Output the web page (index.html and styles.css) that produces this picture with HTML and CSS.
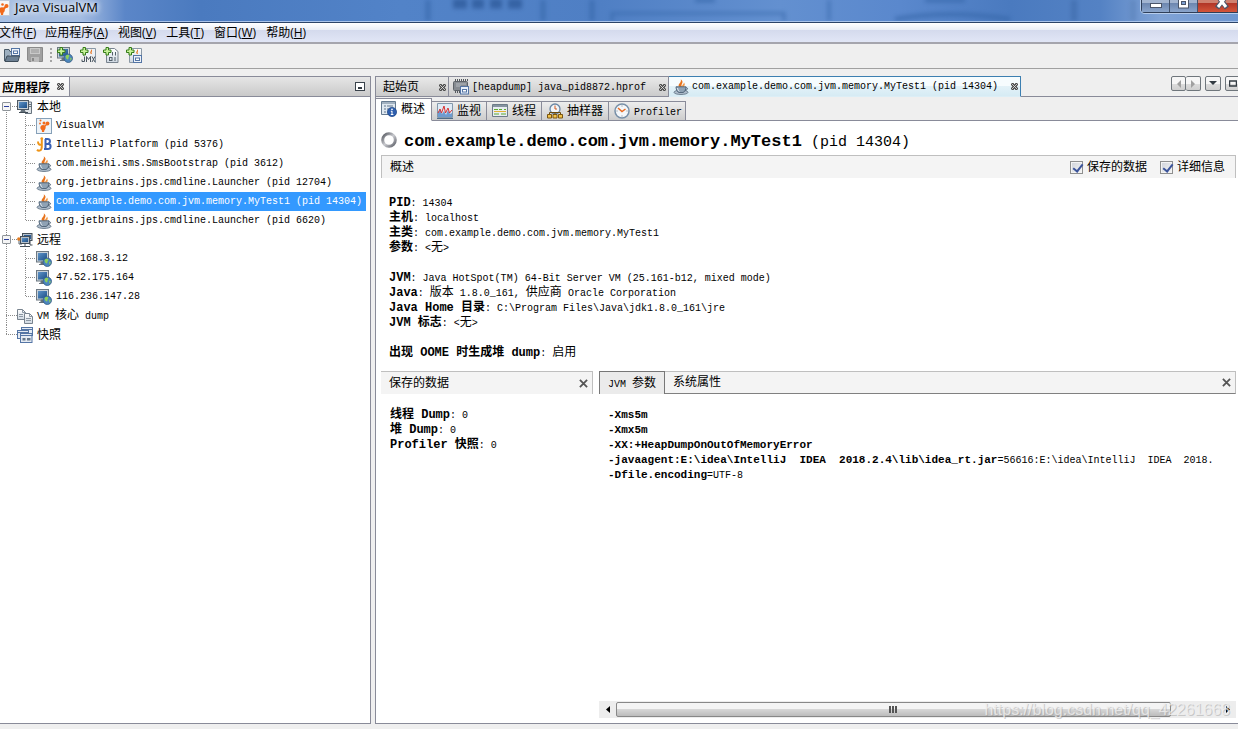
FILE: index.html
```html
<!DOCTYPE html>
<html lang="zh-CN">
<head>
<meta charset="utf-8">
<title>Java VisualVM</title>
<link rel="stylesheet" href="styles.css">
</head>
<body>
<svg class="defs" aria-hidden="true">
  <defs>
    <linearGradient id="screen" x1="0" y1="0" x2="1" y2="1"><stop offset="0" stop-color="#5d93c8"/><stop offset="1" stop-color="#1c4e86"/></linearGradient>
    <linearGradient id="paper" x1="0" y1="0" x2="0" y2="1"><stop offset="0" stop-color="#ffffff"/><stop offset="1" stop-color="#cfd8e2"/></linearGradient>
    <linearGradient id="ring" x1="0" y1="0" x2="1" y2="1"><stop offset="0" stop-color="#55585f"/><stop offset=".5" stop-color="#c9cacf"/><stop offset="1" stop-color="#5d6068"/></linearGradient>
  </defs>
  <symbol id="i-java" viewBox="0 0 16 16">
    <path d="M6.500 8C3.500 5.500 9 4 7.800 .3C12 3.500 7 5 9 8z" fill="#e8731c"/><path d="M9.400 8c-1-2 1.200-2.600 1.600-4.600C12.600 5.500 11.400 6.500 10.800 8z" fill="#f09a4a"/>
    <ellipse cx="8" cy="13.300" rx="7" ry="2.200" fill="#aebccb" stroke="#5c6e80" stroke-width=".8"/>
    <path d="M3 7.800h10c0 3-1.500 5.400-3 5.700H6C4.500 13.200 3 10.800 3 7.800z" fill="#8fa2b4" stroke="#4d6175" stroke-width=".9"/>
    <path d="M4.500 9c.3 1.800 1 3 1.900 3.500" stroke="#e8eef4" fill="none"/><path d="M12.800 8.800c2.500-.6 2.300 2.500-.9 2.400" stroke="#4d6175" fill="none"/>
  </symbol>
  <symbol id="i-vm" viewBox="0 0 16 16">
    <rect x=".5" y=".5" width="15" height="15" fill="#edf3f8" stroke="#86a0b8"/>
    <g fill="#f26a1b"><circle cx="7" cy="9.500" r="2.600"/><circle cx="11.500" cy="5.500" r="1.900"/><circle cx="8" cy="5" r="1.500"/><circle cx="4.500" cy="2.500" r="1"/><circle cx="4" cy="5.500" r=".9"/><path d="M5.500 10l3.500 0-1 4H6zM7 9l4-4 1 1-4 4z"/></g>
  </symbol>
  <symbol id="i-vm-cut" viewBox="6 0 10 16">
    <rect x="-1" y=".5" width="16.500" height="15" fill="#f6f6f6" stroke="#c3ccd8"/>
    <g fill="#f26a1b"><circle cx="8" cy="10" r="2.800"/><circle cx="12.500" cy="6" r="2"/><circle cx="8.500" cy="4.500" r="1.300"/><path d="M6 10h4l-1 5H7zM8 9l4-4 1.500 1.500-4 4z"/></g>
  </symbol>
  <symbol id="i-jb" viewBox="0 0 16 16">
    <path d="M9 2h2.500c3.200 0 3.200 4 .5 4.700c3.600.3 3.400 5.300-.2 5.300H8" fill="none" stroke="#3b62b5" stroke-width="2"/><path d="M9.500 2v10M9 7h4" stroke="#3b62b5" stroke-width="2"/>
    <path d="M5.800 1v8.500c0 4.500-3 5-4.800 3.200M2 4.500c0 3.500 2 3.500 4 3" fill="none" stroke="#ef9518" stroke-width="2"/><circle cx="5.800" cy="1.500" r="1.300" fill="#ef9518"/>
  </symbol>
  <symbol id="i-local" viewBox="0 0 16 16">
    <path d="M11 3h3.500v11.500H8" fill="#dfe4e8" stroke="#68747f"/><path d="M12 5.500h2M12 7.500h2" stroke="#68747f"/>
    <rect x=".5" y="1.500" width="11" height="9" fill="#c8d1d8" stroke="#4f5963"/><rect x="2" y="3" width="8" height="6" fill="url(#screen)"/><path d="M4 11h4l1 2.500H3z" fill="#66727c"/><path d="M2 13.500h9" stroke="#3f4a54"/>
  </symbol>
  <symbol id="i-host" viewBox="0 0 16 16">
    <rect x=".5" y=".5" width="12" height="10.500" fill="#c8d1d8" stroke="#6d7882"/><rect x="2" y="2" width="9" height="7.500" fill="url(#screen)"/><path d="M5 11h4v2H5zM3 13.500h8" fill="#66727c" stroke="#66727c"/>
    <circle cx="11.300" cy="11.300" r="4.200" fill="#4c86be" stroke="#365d83" stroke-width=".8"/><path d="M8.500 9c1.500-1.600 3.500-1.500 3.800-.3c0 1.500-1.400 1.600-.8 3c-.5 1.500-2 .3-2.500-.8zM13 10.500l1.800 1-1.200 2.400z" fill="#8ed159"/>
  </symbol>
  <symbol id="i-remote" viewBox="0 0 16 16">
    <path d="M2 6v6h3" stroke="#58646e" fill="none"/>
    <rect x="5.500" y="1.500" width="9.500" height="7" fill="#b5c0ca" stroke="#444f59"/><path d="M7 3h7v4H7z" fill="#315f94"/>
    <rect x="3.500" y="4.500" width="9" height="7" fill="#b5c0ca" stroke="#444f59"/><rect x="5" y="6" width="6" height="4" fill="url(#screen)"/><path d="M8 12v2M3 14.500h10" stroke="#444f59"/><path d="M13 9v4h2.500" stroke="#444f59" fill="none"/><circle cx="1.800" cy="7" r="1.700" fill="#e07a20"/>
  </symbol>
  <symbol id="i-dump" viewBox="0 0 16 16">
    <path d="M.5 1.500h5l3 3v7h-8z" fill="url(#paper)" stroke="#78838e"/><path d="M5.500 1.500v3h3M2 6.500h4M2 8.500h4" fill="none" stroke="#8b97a3"/>
    <path d="M7.500 5.500h5l3 3v7h-8z" fill="url(#paper)" stroke="#78838e"/><path d="M12.500 5.500v3h3M9 10.500h5M9 12.500h5" fill="none" stroke="#8b97a3"/>
  </symbol>
  <symbol id="i-snap" viewBox="0 0 16 16">
    <g fill="#e5ebf3" stroke="#5475a5"><rect x="4.500" y=".5" width="11" height="8"/><path d="M4.500 2.500h11"/><rect x=".5" y="3.500" width="11" height="8"/><path d="M.5 5.500h11"/><rect x="3.500" y="6.500" width="11.500" height="9"/><path d="M3.500 8.500H15"/></g><path d="M5.500 11h3v2.500h-3zM10 11h3.500v2.500H10z" fill="#66788c"/>
  </symbol>
  <symbol id="i-open" viewBox="0 0 16 16">
    <path d="M.5 14V2.500h4.500l1 2h3" fill="#9eb0c0" stroke="#4b5b69"/><rect x="7.500" y="1.500" width="8" height="7" fill="#eef3f9" stroke="#5475a5"/><rect x="9.500" y="4" width="4" height="2.500" fill="#fff" stroke="#5475a5"/><path d="M1 14.500L3 9h12.500l-1.500 5.500z" fill="#6d8093" stroke="#3e4c59"/>
  </symbol>
  <symbol id="i-save" viewBox="0 0 16 16">
    <path d="M.5.5h15v14H2L.5 13z" fill="#a0a0a0" stroke="#8a8a8a"/><path d="M3 1h10v6H3z" fill="#c9c9c9"/><path d="M4 3h8M4 5h8" stroke="#969696"/><path d="M4 10h8v5H4z" fill="#bcbcbc"/><path d="M6 11v3" stroke="#888" stroke-width="2"/>
  </symbol>
  <symbol id="i-plus" viewBox="0 0 16 16"><path d="M3 .5h2.500V3H8v2.500H5.500V8H3V5.500H.5V3H3z" fill="#c8f29a" stroke="#357c18"/></symbol>
  <symbol id="i-jmx" viewBox="0 0 16 16"><path d="M3.500 1.500h12v14h-12z" fill="#edf1f5" stroke="#8a98a5"/><path d="M11 7c-2-2 1-3 0-5c2.500 2-.5 3 1 5z" fill="#e8731c"/><path d="M1 9h14v7H1z" fill="#eee"/><path d="M4.500 9.500v5H2v-2M6.500 15V9.500l2 3 2-3V15M12 9.500l3 5.500M15 9.500L12 15" fill="none" stroke="#4a5661"/></symbol>
  <symbol id="i-bits" viewBox="0 0 16 16"><path d="M3.500 1.500h8l3.500 3v11H3.500z" fill="url(#paper)" stroke="#78838e"/><path d="M9.500 5v3.500M12.500 5v3.500M12 10v4" stroke="#53606b"/><rect x="6.500" y="10.500" width="2.500" height="3" fill="none" stroke="#53606b"/></symbol>
  <symbol id="i-app" viewBox="0 0 16 16"><path d="M3.500 1.500h12v14h-12z" fill="url(#paper)" stroke="#8a98a5"/><path d="M11 7c-2-2 1-3 0-5c2.500 2-.5 3 1 5z" fill="#e8731c"/><rect x="7.500" y="8.500" width="8" height="7" fill="#eef3f9" stroke="#5475a5"/><rect x="9.500" y="11" width="4" height="2.500" fill="#fff" stroke="#5475a5"/></symbol>
  <symbol id="i-heap" viewBox="0 0 16 16"><path d="M2 1h13" stroke="#53585e" stroke-width="2" stroke-dasharray="1 1"/><rect x=".5" y="2.500" width="14" height="9" rx="1" fill="#868b91" stroke="#5d6268"/><path d="M3 5h10M3 7h5" stroke="#b6bbc1"/><path d="M2 13h5" stroke="#53585e" stroke-width="2" stroke-dasharray="1 1"/><rect x="7.500" y="7.500" width="8" height="7.500" fill="#e8f0fa" stroke="#5475a5"/><rect x="9.500" y="10.500" width="4" height="2.500" fill="#fff" stroke="#5475a5"/></symbol>
  <symbol id="i-info" viewBox="0 0 16 16"><path d="M.5.5h14v13H.5z" fill="#dfe8f0" stroke="#657a90"/><path d="M1 2h13" stroke="#657a90"/><path d="M3 5h2M6 5h6M3 8h2M6 8h3M3 11h2" stroke="#60758b"/><circle cx="11" cy="11" r="4.600" fill="#2e5fae" stroke="#1b4385" stroke-width=".7"/><path d="M11 10v3.500M9.800 10.300H11M9.800 13.500h2.600" stroke="#fff"/><circle cx="11" cy="8.300" r=".9" fill="#fff"/></symbol>
  <symbol id="i-monitor" viewBox="0 0 16 16"><path d="M.5.5h15v14H.5z" fill="#dfeaf5" stroke="#8298ab"/><path d="M1 14V10l2-4 2 5 2-3 2 4 2-5 2 4 2-1v4z" fill="#6d9bd0"/><path d="M1 10l2-4 1.500 4L7 3l1.500 7L11 5l1.500 5L15 7" fill="none" stroke="#d93030"/><path d="M0 15.500h16" stroke="#4d6b88"/></symbol>
  <symbol id="i-threads" viewBox="0 0 16 16"><path d="M.5 1.500h15v12H.5z" fill="#e8edf1" stroke="#6d7b88"/><path d="M1 3h14" stroke="#8694a1" stroke-width="2"/><path d="M2 6.500h4M7 6.500h3M12 6.500h2" stroke="#5cab32"/><path d="M2 8.500h12" stroke="#e3b233"/><path d="M2 11h5M9 11h5" stroke="#5cab32"/></symbol>
  <symbol id="i-sampler" viewBox="0 0 16 16"><circle cx="8" cy="6" r="5" fill="#f1f4f8" stroke="#6a86a3" stroke-width="1.300"/><path d="M8 2.500V6h2" stroke="#d05a20" fill="none"/><path d="M2.500 11V9.500h11V11M8 9.500V11" fill="none" stroke="#6b4a0d"/><g fill="#f2c34a" stroke="#7c5610"><path d="M.5 11.500h4v3.500h-4zM6 11.500h4v3.500H6zM11.500 11.500h4v3.500h-4z"/></g></symbol>
  <symbol id="i-clock" viewBox="0 0 16 16"><circle cx="8" cy="8" r="7" fill="#f4f7fa" stroke="#7890a8" stroke-width="1.500"/><path d="M8 2.500v1M8 12.500v1M2.500 8h1M12.500 8h1" stroke="#7d8790"/><path d="M4 5l4 3.500L11.500 6" fill="none" stroke="#ea6a20" stroke-width="1.500"/></symbol>
  <symbol id="i-ring" viewBox="0 0 16 16"><circle cx="8" cy="8" r="6.300" fill="none" stroke="url(#ring)" stroke-width="3"/></symbol>
  <symbol id="i-tabx" viewBox="0 0 7 7"><path d="M1 0h1.500L3.500 1.500L4.500 0H6L7 1v1L5.500 3.500L7 5v1L6 7H4.500L3.500 5.500L2.500 7H1L0 6V5l1.500-1.500L0 2V1z" fill="#4c4c4c"/><path d="M1 1l5 5M6 1L1 6" stroke="#e8e8e8" stroke-width=".8"/></symbol>
  <symbol id="i-x" viewBox="0 0 8 8"><path d="M.8.8l6.400 6.400M7.200.8L.8 7.200" stroke="#555" stroke-width="1.600"/></symbol>
</svg>

<header class="titlebar">
  <svg class="backdrop" viewBox="0 0 1238 22" preserveAspectRatio="none" aria-hidden="true">
    <g class="blurred" fill="none" stroke="#3566a8">
      <path d="M428 0v22M543 0v22M592 0v22" stroke-width="5"/><path d="M453 4h14M472 4h12M490 4h12M508 4h14" stroke="#244f8e" stroke-width="10"/>
      <path d="M612 22v-8h172v8M829 0v22" stroke-width="3"/><path d="M895 20q55-10 115 0M925 0h40M695 0h20" stroke-width="5"/><path d="M1074 0v22" stroke="#3d6aa8" stroke-width="6"/><path d="M1133 0v22" stroke="#5b82b8" stroke-width="6"/>
    </g>
  </svg>
  <svg class="icon"><use href="#i-vm-cut"/></svg>
  <h1 class="app-name">Java VisualVM</h1>
  <div class="win-buttons">
    <button class="win-btn" aria-label="最小化"><svg width="14" height="14"><rect x="1.500" y="6.500" width="11" height="4" fill="#fff" stroke="#4b5569"/></svg></button>
    <button class="win-btn win-max" aria-label="最大化"><svg width="12" height="14"><rect x=".5" y="-2" width="10" height="12" fill="#fff" stroke="#4b5569"/><rect x="3.500" y="3.500" width="4" height="3" fill="#7da0d2" stroke="#4b5569"/></svg></button>
    <button class="win-btn win-close" aria-label="关闭"><svg width="14" height="14"><path d="M2 -3L12 10M12 -3L2 10" stroke="#4b5569" stroke-width="5"/><path d="M2.500 -2L11 9M11.500 -2L3 9" stroke="#fff" stroke-width="3"/></svg></button>
  </div>
</header>

<nav class="menubar">
  <button>文件(<u>F</u>)</button><button>应用程序(<u>A</u>)</button><button>视图(<u>V</u>)</button><button>工具(<u>T</u>)</button><button>窗口(<u>W</u>)</button><button>帮助(<u>H</u>)</button>
</nav>

<div class="toolbar">
  <button aria-label="打开"><svg class="icon"><use href="#i-open"/></svg></button>
  <button aria-label="保存" disabled><svg class="icon"><use href="#i-save"/></svg></button>
  <span class="grip"></span>
  <button aria-label="添加远程主机"><svg class="icon"><use href="#i-host"/><use href="#i-plus"/></svg></button>
  <button aria-label="添加 JMX 连接"><svg class="icon"><use href="#i-jmx"/><use href="#i-plus"/></svg></button>
  <button aria-label="添加核心 dump"><svg class="icon"><use href="#i-bits"/><use href="#i-plus"/></svg></button>
  <button aria-label="添加快照"><svg class="icon"><use href="#i-app"/><use href="#i-plus"/></svg></button>
</div>

<div class="workspace">
  <aside class="side">
    <div class="side-head">
      <div class="side-tab"><b>应用程序</b><button class="tab-close" aria-label="关闭"><svg><use href="#i-tabx"/></svg></button></div>
      <button class="minimize" aria-label="最小化"></button>
    </div>
    <ul class="tree">
      <li class="branch"><div class="node"><button class="toggle" aria-label="折叠"></button><svg class="icon"><use href="#i-local"/></svg><span class="name">本地</span></div>
        <ul>
          <li><div class="node"><svg class="icon"><use href="#i-vm"/></svg><span class="name">VisualVM</span></div></li>
          <li><div class="node"><svg class="icon"><use href="#i-jb"/></svg><span class="name">IntelliJ Platform (pid 5376)</span></div></li>
          <li><div class="node"><svg class="icon"><use href="#i-java"/></svg><span class="name">com.meishi.sms.SmsBootstrap (pid 3612)</span></div></li>
          <li><div class="node"><svg class="icon"><use href="#i-java"/></svg><span class="name">org.jetbrains.jps.cmdline.Launcher (pid 12704)</span></div></li>
          <li><div class="node"><svg class="icon"><use href="#i-java"/></svg><span class="name selected">com.example.demo.com.jvm.memory.MyTest1 (pid 14304)</span></div></li>
          <li><div class="node"><svg class="icon"><use href="#i-java"/></svg><span class="name">org.jetbrains.jps.cmdline.Launcher (pid 6620)</span></div></li>
        </ul>
      </li>
      <li class="branch"><div class="node"><button class="toggle" aria-label="折叠"></button><svg class="icon"><use href="#i-remote"/></svg><span class="name">远程</span></div>
        <ul>
          <li><div class="node"><svg class="icon"><use href="#i-host"/></svg><span class="name">192.168.3.12</span></div></li>
          <li><div class="node"><svg class="icon"><use href="#i-host"/></svg><span class="name">47.52.175.164</span></div></li>
          <li><div class="node"><svg class="icon"><use href="#i-host"/></svg><span class="name">116.236.147.28</span></div></li>
        </ul>
      </li>
      <li><div class="node mixed"><svg class="icon"><use href="#i-dump"/></svg><span class="name">VM <span class="zh">核心</span> dump</span></div></li>
      <li><div class="node"><svg class="icon"><use href="#i-snap"/></svg><span class="name">快照</span></div></li>
    </ul>
  </aside>

  <main class="editor">
    <div class="doc-tabs">
      <div class="doc-tab start"><span>起始页</span><button class="tab-close" aria-label="关闭"><svg><use href="#i-tabx"/></svg></button></div>
      <div class="doc-tab"><svg class="icon"><use href="#i-heap"/></svg><span>[heapdump] java_pid8872.hprof</span><button class="tab-close" aria-label="关闭"><svg><use href="#i-tabx"/></svg></button></div>
      <div class="doc-tab active"><svg class="icon"><use href="#i-java"/></svg><span>com.example.demo.com.jvm.memory.MyTest1 (pid 14304)</span><button class="tab-close" aria-label="关闭"><svg><use href="#i-tabx"/></svg></button></div>
      <div class="doc-tools">
        <span class="pair"><button aria-label="上一个" disabled><svg width="6" height="8"><path d="M5 0v8L1 4z"/></svg></button><button aria-label="下一个" disabled><svg width="6" height="8"><path d="M1 0v8l4-4z"/></svg></button></span>
        <button class="solo" aria-label="列表"><svg width="8" height="5"><path d="M0 0h8L4 4z"/></svg></button>
        <button class="solo" aria-label="最大化"><svg width="8" height="7"><path d="M.5 1h7v5h-7z" fill="none" stroke="#333b42" stroke-width="1.500"/></svg></button>
      </div>
    </div>

    <div class="view-tabs" role="tablist">
      <button class="view-tab active" role="tab"><svg class="icon"><use href="#i-info"/></svg><span>概述</span></button>
      <button class="view-tab" role="tab"><svg class="icon"><use href="#i-monitor"/></svg><span>监视</span></button>
      <button class="view-tab" role="tab"><svg class="icon"><use href="#i-threads"/></svg><span>线程</span></button>
      <button class="view-tab" role="tab"><svg class="icon"><use href="#i-sampler"/></svg><span>抽样器</span></button>
      <button class="view-tab" role="tab"><svg class="icon"><use href="#i-clock"/></svg><span>Profiler</span></button>
    </div>

    <div class="overview">
      <h2 class="heading"><svg class="icon"><use href="#i-ring"/></svg><span><b>com.example.demo.com.jvm.memory.MyTest1</b> (pid 14304)</span></h2>
      <div class="bar"><span class="bar-title">概述</span>
        <label><input type="checkbox" checked><span>保存的数据</span></label>
        <label><input type="checkbox" checked><span>详细信息</span></label>
      </div>
      <div class="details">
        <p><b>PID</b>: 14304</p>
        <p><b>主机</b>: localhost</p>
        <p><b>主类</b>: com.example.demo.com.jvm.memory.MyTest1</p>
        <p><b>参数</b>: &lt;<span class="zh">无</span>&gt;</p>
        <p class="group"><b>JVM</b>: Java HotSpot(TM) 64-Bit Server VM (25.161-b12, mixed mode)</p>
        <p><b>Java</b>: <span class="zh">版本</span> 1.8.0_161, <span class="zh">供应商</span> Oracle Corporation</p>
        <p><b>Java Home 目录</b>: C:\Program Files\Java\jdk1.8.0_161\jre</p>
        <p><b>JVM 标志</b>: &lt;<span class="zh">无</span>&gt;</p>
        <p class="group"><b>出现 OOME 时生成堆 dump</b>: <span class="zh">启用</span></p>
      </div>

      <div class="lower">
        <section class="saved">
          <div class="bar"><span class="bar-title">保存的数据</span><button class="close" aria-label="关闭"><svg><use href="#i-x"/></svg></button></div>
          <div class="panel-text">
            <p><b>线程 Dump</b>: 0</p>
            <p><b>堆 Dump</b>: 0</p>
            <p><b>Profiler 快照</b>: 0</p>
          </div>
        </section>
        <section class="args">
          <div class="bar"><button class="sub-tab active">JVM <span class="zh">参数</span></button><button class="sub-tab"><span class="zh">系统属性</span></button><button class="close" aria-label="关闭"><svg><use href="#i-x"/></svg></button></div>
          <div class="panel-text">
            <p><b>-Xms5m</b></p>
            <p><b>-Xmx5m</b></p>
            <p><b>-XX:+HeapDumpOnOutOfMemoryError</b></p>
            <p><b>-javaagent:E:\idea\IntelliJ  IDEA  2018.2.4\lib\idea_rt.jar</b>=56616:E:\idea\IntelliJ  IDEA  2018.</p>
            <p><b>-Dfile.encoding</b>=UTF-8</p>
          </div>
          <div class="scrollbar">
            <button aria-label="向左"><svg width="4" height="8"><path d="M4 0v7L0 3.500z"/></svg></button>
            <div class="track"><div class="thumb"><i></i><i></i><i></i></div></div>
            <button aria-label="向右"><svg width="4" height="8"><path d="M0 0v7l4-3.500z"/></svg></button>
          </div>
        </section>
      </div>
    </div>
    <span class="watermark">https://blog.csdn.net/qq_42261668</span>
  </main>
</div>
</body>
</html>
```
FILE: styles.css
```css
* { box-sizing: border-box; }

:root {
  --mono: "Liberation Mono", "Noto Sans CJK SC", monospace;
  --cjk: "Noto Sans CJK SC", sans-serif;
  --line: #898b99;
}

body {
  margin: 0;
  height: 100vh;
  display: flex;
  flex-direction: column;
  overflow: hidden;
  background: #efefef;
  color: #000;
  font: 10px/15px var(--mono);
}

.defs { position: absolute; width: 0; height: 0; }
button { padding: 0; border: 0; background: none; color: inherit; font: inherit; }
p, h1, h2, ul { margin: 0; padding: 0; }
ul { list-style: none; }
svg { display: block; flex: none; }
.icon { width: 16px; height: 16px; }
.zh { font-size: 12px; }

/* Title bar */
.titlebar {
  position: relative;
  display: flex;
  flex: none;
  align-items: flex-start;
  gap: 5px;
  height: 23px;
  overflow: hidden;
  border-bottom: 1px solid #2b4468;
  box-shadow: inset 0 -1px #a9c4ea;
  background: linear-gradient(90deg, #a9c0e2 0, #a5bde2 80px, #5b86c8 125px, #4a7abf 200px, #5283c8 400px, #4f7fc4 600px, #6390d0 780px, #5a88cd 900px, #4a7abf 1010px, #5482c4 1100px, #80a3d6 1160px, #6d96d0 100%);
}
.titlebar > .icon { position: relative; width: 10px; }
.backdrop { position: absolute; inset: 0; width: 100%; height: 21px; }
.blurred { filter: blur(2px); opacity: .6; }
.app-name { position: relative; font: 13px/15px "Open Sans", sans-serif; text-shadow: 0 0 6px #fff, 0 0 6px #fff; }
.win-buttons {
  position: relative;
  display: flex;
  margin-left: auto;
  height: 13px;
  border: solid #2f3f59;
  border-width: 0 0 1px 1px;
  border-radius: 0 0 0 4px;
  box-shadow: 0 1px #b7cdec, -1px 0 #b7cdec;
}
.win-btn {
  display: flex;
  align-items: flex-start;
  justify-content: center;
  width: 28px;
  height: 12px;
  overflow: hidden;
  border-right: 1px solid #43536d;
  background: linear-gradient(#a2b4d0 0 3px, #6c85ae 3px, #8aa5cc);
}
.win-btn svg { margin-top: -3px; }
.win-max svg, .win-close svg { margin-top: -2px; }
.win-close { width: 40px; padding-left: 8px; background: linear-gradient(#cf8170 0 3px, #b03426 3px, #d4553a); }

/* Menu and toolbar */
.menubar {
  display: flex;
  flex: none;
  gap: 9px;
  height: 21px;
  border-bottom: 2px solid #a5a5ad;
  background: linear-gradient(#fff, #e9eef6 7px, #d4daed 7px, #e1e6f6);
}
.menubar button { font: 12px/19px "Open Sans", var(--cjk); }
.menubar button + button ~ button { padding-left: 1px; }
.menubar button:first-child { margin-left: -1px; }
.toolbar {
  display: flex;
  flex: none;
  align-items: center;
  gap: 7px;
  height: 25px;
  padding: 0 4px 2px;
  border-bottom: 1px solid #a0a0a0;
}
.grip { width: 2px; height: 14px; margin: 0 -2px 0 0; border-left: 2px dotted #a5a5a5; }

/* Panes */
.workspace { display: flex; flex: 1; min-height: 0; gap: 4px; padding: 7px 0 5px; }
.side {
  display: flex;
  flex: 0 0 371px;
  flex-direction: column;
  border: 1px solid var(--line);
  border-left: 0;
  background: #fff;
}
.side-head {
  display: flex;
  align-items: center;
  justify-content: space-between;
  height: 20px;
  padding-right: 5px;
  border-bottom: 1px solid var(--line);
  background: linear-gradient(#e6e6e6, #c9c9c9);
}
.side-tab {
  display: flex;
  align-items: center;
  gap: 7px;
  height: 19px;
  padding: 0 5px 0 2px;
  border-right: 1px solid var(--line);
  background: linear-gradient(#fdfdfd, #f0f0f0);
  font: 12px/19px var(--cjk);
}
.tab-close svg { width: 7px; height: 7px; }
.minimize { width: 10px; height: 9px; border: 1px solid #3a434b; background: linear-gradient(#333b42, #333b42) center 4px / 4px 2px no-repeat #fff; }

/* Tree */
.tree { padding-left: 2px; }
.node {
  display: flex;
  align-items: center;
  height: 19px;
  padding-left: 15px;
  background: repeating-linear-gradient(90deg, #8c8c8c 0 1px, transparent 1px 2px) 4px 9px / 11px 1px no-repeat;
  font-size: 12px;
}
.name { margin-left: 2px; padding: 0 2px; line-height: 19px; white-space: nowrap; }
.tree > li > .node .name { padding-top: 3px; }
.tree > li > .node.mixed { font-size: 10px; }
.tree > li > .node.mixed .name { padding-top: 1px; }
.tree ul .node { padding-left: 34px; background-position: 24px 9px; background-size: 10px 1px; font-size: 10px; }
.name.selected { padding-right: 4px; background: #3399ff; color: #fff; }
.node:has(> .toggle) { padding-left: 0; }
.tree > li { background: repeating-linear-gradient(#8c8c8c 0 1px, transparent 1px 2px) 4px 0 / 1px 100% no-repeat; }
.tree > li:first-child { background-position: 4px 9px; }
.tree > li:last-child { background-size: 1px 10px; }
.tree ul li { background: repeating-linear-gradient(#8c8c8c 0 1px, transparent 1px 2px) 23px 0 / 1px 100% no-repeat; }
.tree ul li:last-child { background-size: 1px 10px; }
.toggle {
  width: 9px;
  height: 9px;
  margin-right: 6px;
  border: 1px solid #8e9499;
  border-radius: 1px;
  background: linear-gradient(#2c3f9c, #2c3f9c) center / 5px 1px no-repeat #f5f5f5;
}

/* Editor */
.editor {
  position: relative;
  display: flex;
  flex: 1;
  min-width: 0;
  flex-direction: column;
  border-left: 1px solid var(--line);
  border-bottom: 1px solid var(--line);
}
.doc-tabs { display: flex; flex: none; height: 21px; box-shadow: inset 0 -1px var(--line); }
.doc-tab {
  display: flex;
  align-items: center;
  gap: 3px;
  padding: 1px 2px 0 4px;
  border: solid var(--line);
  border-width: 1px 1px 1px 0;
  background: linear-gradient(#e9e9e9, #cbcbcb);
  white-space: nowrap;
}
.doc-tab .tab-close { margin-left: 10px; }
.doc-tab.start { width: 73px; padding-left: 7px; font-size: 12px; justify-content: space-between; }
.doc-tab.start span { padding-top: 2px; }
.doc-tab.active {
  padding-top: 0;
  border-color: #3c7fb1;
  border-bottom-color: #dceef6;
  background: linear-gradient(#f6fcfe 0 9px, #e3f2f8 9px, #d6ebf4);
}
.doc-tools { display: flex; align-items: flex-start; gap: 4px; margin: 0 -3px 0 auto; }
.doc-tools button {
  display: grid;
  place-items: center;
  width: 15px;
  height: 15px;
  border: 1px solid #6f767c;
  border-radius: 2px;
  background: linear-gradient(#f6f6f6 0 7px, #dcdcdc 7px, #cfcfcf);
}
.doc-tools .solo { width: 16px; }
.doc-tools svg { fill: #333b42; }
.pair { display: flex; }
.pair svg { fill: #a0a0a0; }
.pair button + button { border-left: 0; }

.view-tabs { display: flex; flex: none; align-items: flex-end; height: 24px; padding-top: 1px; box-shadow: inset 0 -1px var(--line); }
.view-tab {
  display: flex;
  align-items: center;
  gap: 4px;
  height: 20px;
  padding: 0 5px;
  border: solid var(--line);
  border-width: 1px 1px 1px 0;
  background: linear-gradient(#ededed, #cdcdcd);
  font-size: 12px;
  white-space: nowrap;
}
.view-tab span { padding-top: 3px; }
.view-tab.active { height: 23px; padding: 0 6px 2px 5px; border-bottom-color: #fff; background: #fff; }
.view-tab:last-child { padding-right: 3px; font-size: 10px; }

/* Overview */
.overview { display: flex; flex: 1; flex-direction: column; min-height: 0; padding: 0 2px 5px 5px; background: #fff; }
.heading { display: flex; align-items: center; gap: 7px; height: 34px; font-weight: 400; font-size: 15px; line-height: 34px; white-space: nowrap; }
.heading .icon { margin-top: 3px; }
.heading span { padding-top: 9px; }
.heading .icon { width: 16px; }
.heading b { font-size: 17px; }
.bar {
  display: flex;
  flex: none;
  align-items: center;
  height: 23px;
  border: solid #bfbfbf;
  border-width: 1px 1px 0;
  background: #f4f4f4;
  font-size: 12px;
}
.bar-title { margin: 0 auto 0 8px; padding-top: 3px; }
.bar label { display: flex; align-items: center; gap: 4px; margin-right: 10px; }
.bar label span { padding-top: 3px; }
.bar label + label { margin-left: 3px; }
.bar input {
  appearance: none;
  width: 13px;
  height: 13px;
  margin: 0;
  border: 1px solid #8e8f8f;
  background: linear-gradient(135deg, #cfd3da, #f6f6f6);
  box-shadow: inset 0 0 0 1px #f4f4f4;
}
.bar input:checked::before {
  content: "";
  display: block;
  width: 4px;
  height: 8px;
  margin: 0 0 0 4px;
  border: solid #3b549b;
  border-width: 0 2px 2px 0;
  transform: rotate(38deg);
}
.details { padding: 18px 8px 10px; white-space: nowrap; }
.details p, .panel-text p { height: 15px; white-space: pre; }
.details .group { margin-top: 15px; }
.details b, .panel-text b { font-size: 12px; }

.lower { display: flex; flex: 1; gap: 6px; min-height: 0; }
.saved { flex: 0 0 212px; }
.args { display: flex; flex: 1; min-width: 0; flex-direction: column; }
.saved .bar { border-left: 0; }
.args .bar { border-left: 0; border-bottom: 1px solid #808080; }
.close { margin-left: auto; padding: 0 4px; }
.close svg { width: 9px; height: 9px; }
.sub-tab { align-self: stretch; padding: 2px 8px 0; font-size: 10px; }
.sub-tab.active { margin: -1px 0; border: 1px solid #777; border-bottom: 0; background: #ebebeb; }
.panel-text { padding: 14px 9px 0; }
.args .panel-text b { font-size: 11px; }

.scrollbar { display: flex; height: 17px; margin-top: auto; background: #ededed; }
.scrollbar button { display: grid; flex: 0 0 17px; place-items: center; }
.track { flex: 1; padding: 1px 0; }
.thumb {
  display: flex;
  align-items: center;
  justify-content: center;
  gap: 1px;
  width: 92%;
  height: 15px;
  border: 1px solid #888;
  border-radius: 2px;
  background: linear-gradient(#f4f4f4 0 6px, #d8d8d8 6px, #bcbcbc);
}
.thumb i { width: 2px; height: 7px; background: #555; }

.watermark {
  position: absolute;
  right: 8px;
  bottom: 4px;
  color: rgba(240, 240, 240, .8);
  font: 16px/18px "Liberation Sans", sans-serif;
  text-shadow: 1px 1px rgba(140, 140, 140, .4);
}
```
